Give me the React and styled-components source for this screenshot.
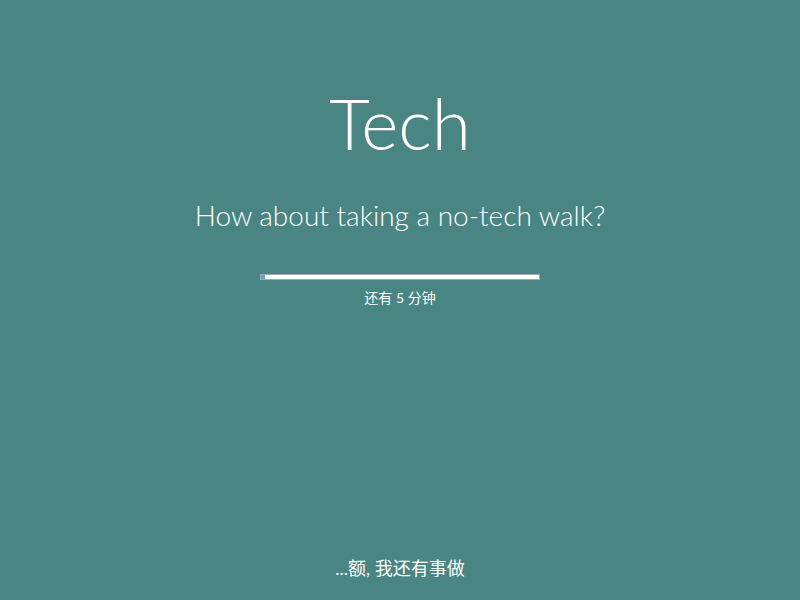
import React from "react";
import styled, { createGlobalStyle } from "styled-components";

const Global = createGlobalStyle`
  html, body { margin: 0; padding: 0; background: #488583; }
  body { font-family: Lato, "Noto Sans CJK SC", sans-serif; color: #fff; }
`;

const Page = styled.div`
  height: 600px;
  display: flex;
  flex-direction: column;
  align-items: center;
  box-sizing: border-box;
  padding-top: 78px;
`;

const Title = styled.h1`
  margin: 0;
  font-weight: 300;
  font-size: 71px;
  line-height: 90px;
`;

const Subtitle = styled.h2`
  margin: 29px 0 0;
  font-weight: 300;
  font-size: 28px;
  line-height: 36px;
`;

const Bar = styled.div`
  margin-top: 41px;
  width: 280px;
  height: 6px;
  box-sizing: border-box;
  border: 1px solid #a9a9a9;
  background: #fff;
  display: flex;
`;

const Fill = styled.div`
  background: #6a9fe0;
  height: 100%;
`;

const Remain = styled.div`
  margin-top: 8px;
  font-size: 14px;
  line-height: 20px;
  font-family: Lato, "Noto Sans CJK SC", sans-serif;
`;

const Spacer = styled.div`
  flex: 1;
`;

const Dismiss = styled.a`
  margin-bottom: 20px;
  font-size: 18px;
  line-height: 24px;
  color: #fff;
  cursor: pointer;
`;

export default function App() {
  return (
    <>
      <Global />
      <Page>
        <Title>Tech</Title>
        <Subtitle>How about taking a no-tech walk?</Subtitle>
        <Bar>
          <Fill style={{ width: "4px" }} />
        </Bar>
        <Remain>还有 5 分钟</Remain>
        <Spacer />
        <Dismiss>...额, 我还有事做</Dismiss>
      </Page>
    </>
  );
}
